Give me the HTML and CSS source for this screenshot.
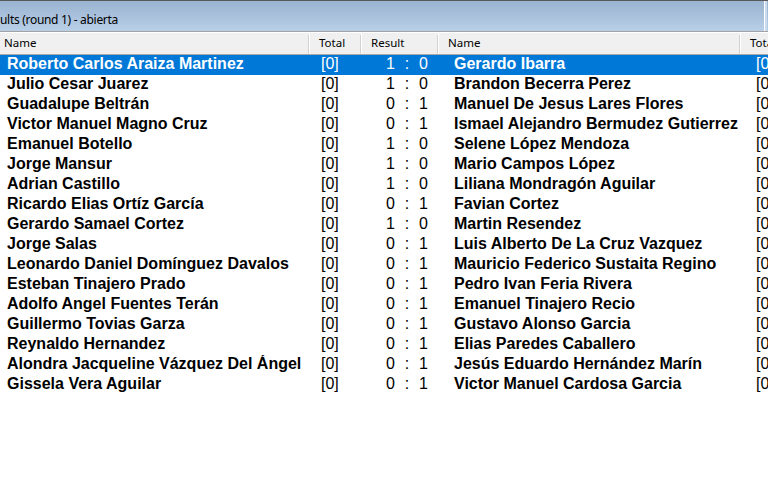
FILE: index.html
```html
<!DOCTYPE html>
<html lang="en">
<head>
  <meta charset="UTF-8">
  <title>Results (round 1) - abierta</title>
  <link rel="stylesheet" href="styles.css">
</head>
<body>

  <!-- Window caption -->
  <div class="caption">
    <span class="caption-text">ults (round 1) - abierta</span>
    <span class="caption-edge"></span>
  </div>

  <!-- Column headers -->
  <div class="header row-grid">
    <div class="hcell first">Name</div>
    <div class="hcell">Total</div>
    <div class="hcell">Result</div>
    <div class="hcell">Name</div>
    <div class="hcell">Total</div>
  </div>

  <!-- Pairings -->
  <div class="list" id="list"></div>

  <script>
    const pairings = [
      ['Roberto Carlos Araiza Martinez', '1', '0', 'Gerardo Ibarra'],
      ['Julio Cesar Juarez', '1', '0', 'Brandon Becerra Perez'],
      ['Guadalupe Beltrán', '0', '1', 'Manuel De Jesus Lares Flores'],
      ['Victor Manuel Magno Cruz', '0', '1', 'Ismael Alejandro Bermudez Gutierrez'],
      ['Emanuel Botello', '1', '0', 'Selene López Mendoza'],
      ['Jorge Mansur', '1', '0', 'Mario Campos López'],
      ['Adrian Castillo', '1', '0', 'Liliana Mondragón Aguilar'],
      ['Ricardo Elias Ortíz García', '0', '1', 'Favian Cortez'],
      ['Gerardo Samael Cortez', '1', '0', 'Martin Resendez'],
      ['Jorge Salas', '0', '1', 'Luis Alberto De La Cruz Vazquez'],
      ['Leonardo Daniel Domínguez Davalos', '0', '1', 'Mauricio Federico Sustaita Regino'],
      ['Esteban Tinajero Prado', '0', '1', 'Pedro Ivan Feria Rivera'],
      ['Adolfo Angel Fuentes Terán', '0', '1', 'Emanuel Tinajero Recio'],
      ['Guillermo Tovias Garza', '0', '1', 'Gustavo Alonso Garcia'],
      ['Reynaldo Hernandez', '0', '1', 'Elias Paredes Caballero'],
      ['Alondra Jacqueline Vázquez Del Ángel', '0', '1', 'Jesús Eduardo Hernández Marín'],
      ['Gissela Vera Aguilar', '0', '1', 'Victor Manuel Cardosa Garcia']
    ];

    const list = document.getElementById('list');

    pairings.forEach((p, i) => {
      const row = document.createElement('div');
      row.className = 'row row-grid' + (i === 0 ? ' selected' : '');
      row.innerHTML =
        '<div class="name">' + p[0] + '</div>' +
        '<div class="total">[0]</div>' +
        '<div class="result"><span class="score-a">' + p[1] + '</span>' +
        '<span class="colon">:</span><span class="score-b">' + p[2] + '</span></div>' +
        '<div class="name name-b">' + p[3] + '</div>' +
        '<div class="total total-b">[0]</div>';
      list.appendChild(row);
    });
  </script>
</body>
</html>
```

FILE: styles.css
```css
body {
  margin: 0;
  padding: 0;
  width: 768px;
  height: 496px;
  overflow: hidden;
  background: #fff;
  font-family: 'Liberation Sans', Arial, sans-serif;
}

/* caption bar */
.caption {
  height: 30px;
  border-top: 1px solid #595959;
  border-bottom: 1px solid #a3a3a3;
  background: linear-gradient(to bottom, #99b3d0, #b9cfe8);
  display: flex;
  align-items: flex-end;
}

.caption-text {
  flex: 1;
  white-space: pre;
  font-family: 'Noto Sans', 'Open Sans', sans-serif;
  font-size: 12px;
  letter-spacing: -0.3px;
  color: #000;
  padding-bottom: 3px;
}

.caption-edge {
  align-self: stretch;
  width: 2px;
  margin-right: 1px;
  border-left: 1px solid #fff;
  background: #c9dbee;
}

/* shared column layout */
.row-grid {
  display: grid;
  grid-template-columns: 309px 52px 77px 302px 60px;
  white-space: nowrap;
}

.header {
  height: 21px;
  background: #f0f0f0;
  border-top: 1px solid #fff;
  border-bottom: 1px solid #a8a8a8;
}

.hcell {
  font-family: 'Noto Sans', 'Open Sans', sans-serif;
  font-size: 11.5px;
  line-height: 20px;
  color: #000;
  padding-left: 9px;
  border-left: 1px solid #fff;
  position: relative;
}

.hcell.first {
  padding-left: 4px;
  border-left: none;
}

.hcell::after {
  content: '';
  position: absolute;
  right: 0;
  top: 2px;
  bottom: 0;
  width: 1px;
  background: #d2d2d2;
}

/* pairing rows */
.row {
  height: 20px;
  line-height: 18px;
  font-size: 16px;
  color: #000;
}

.row.selected {
  background: #0078d7;
  color: #fff;
}

.name {
  font-weight: bold;
  padding-left: 7px;
  overflow: hidden;
}

.name-b {
  padding-left: 16px;
}

.total {
  padding-left: 12px;
}

.total-b {
  padding-left: 16px;
}

.result {
  display: flex;
}

.score-a {
  width: 34px;
  text-align: right;
}

.colon {
  width: 24px;
  text-align: center;
}
```
